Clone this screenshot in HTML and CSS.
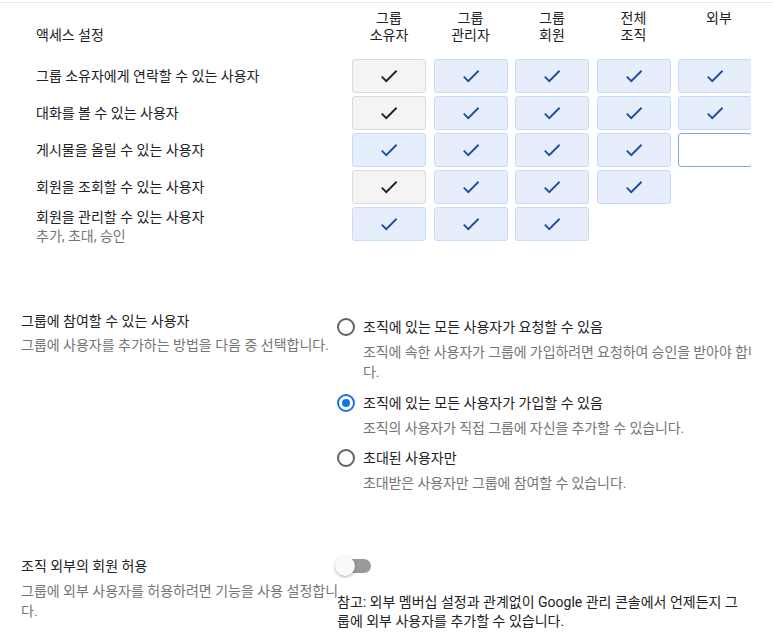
FILE: index.html
```html
<!DOCTYPE html>
<html lang="ko">
<head>
<meta charset="utf-8">
<title>그룹 설정</title>
<link rel="stylesheet" href="styles.css">
</head>
<body>
<div class="topline"></div>
<div class="page">
  <div class="access">
    <div class="hlabel">액세스 설정</div>
    <div class="hcol">그룹<br>소유자</div>
    <div class="hcol">그룹<br>관리자</div>
    <div class="hcol">그룹<br>회원</div>
    <div class="hcol">전체<br>조직</div>
    <div class="hcol hcol-ext">외부</div>

    <div class="rlabel">그룹 소유자에게 연락할 수 있는 사용자</div>
    <div class="cell locked"><svg class="chk" viewBox="0 0 24 24"><path d="M9 16.17L4.83 12l-1.42 1.41L9 19 21 7l-1.41-1.41z"/></svg></div>
    <div class="cell on"><svg class="chk" viewBox="0 0 24 24"><path d="M9 16.17L4.83 12l-1.42 1.41L9 19 21 7l-1.41-1.41z"/></svg></div>
    <div class="cell on"><svg class="chk" viewBox="0 0 24 24"><path d="M9 16.17L4.83 12l-1.42 1.41L9 19 21 7l-1.41-1.41z"/></svg></div>
    <div class="cell on"><svg class="chk" viewBox="0 0 24 24"><path d="M9 16.17L4.83 12l-1.42 1.41L9 19 21 7l-1.41-1.41z"/></svg></div>
    <div class="cell on"><svg class="chk" viewBox="0 0 24 24"><path d="M9 16.17L4.83 12l-1.42 1.41L9 19 21 7l-1.41-1.41z"/></svg></div>

    <div class="rlabel">대화를 볼 수 있는 사용자</div>
    <div class="cell locked"><svg class="chk" viewBox="0 0 24 24"><path d="M9 16.17L4.83 12l-1.42 1.41L9 19 21 7l-1.41-1.41z"/></svg></div>
    <div class="cell on"><svg class="chk" viewBox="0 0 24 24"><path d="M9 16.17L4.83 12l-1.42 1.41L9 19 21 7l-1.41-1.41z"/></svg></div>
    <div class="cell on"><svg class="chk" viewBox="0 0 24 24"><path d="M9 16.17L4.83 12l-1.42 1.41L9 19 21 7l-1.41-1.41z"/></svg></div>
    <div class="cell on"><svg class="chk" viewBox="0 0 24 24"><path d="M9 16.17L4.83 12l-1.42 1.41L9 19 21 7l-1.41-1.41z"/></svg></div>
    <div class="cell on"><svg class="chk" viewBox="0 0 24 24"><path d="M9 16.17L4.83 12l-1.42 1.41L9 19 21 7l-1.41-1.41z"/></svg></div>

    <div class="rlabel">게시물을 올릴 수 있는 사용자</div>
    <div class="cell on"><svg class="chk" viewBox="0 0 24 24"><path d="M9 16.17L4.83 12l-1.42 1.41L9 19 21 7l-1.41-1.41z"/></svg></div>
    <div class="cell on"><svg class="chk" viewBox="0 0 24 24"><path d="M9 16.17L4.83 12l-1.42 1.41L9 19 21 7l-1.41-1.41z"/></svg></div>
    <div class="cell on"><svg class="chk" viewBox="0 0 24 24"><path d="M9 16.17L4.83 12l-1.42 1.41L9 19 21 7l-1.41-1.41z"/></svg></div>
    <div class="cell on"><svg class="chk" viewBox="0 0 24 24"><path d="M9 16.17L4.83 12l-1.42 1.41L9 19 21 7l-1.41-1.41z"/></svg></div>
    <div class="cell off"></div>

    <div class="rlabel">회원을 조회할 수 있는 사용자</div>
    <div class="cell locked"><svg class="chk" viewBox="0 0 24 24"><path d="M9 16.17L4.83 12l-1.42 1.41L9 19 21 7l-1.41-1.41z"/></svg></div>
    <div class="cell on"><svg class="chk" viewBox="0 0 24 24"><path d="M9 16.17L4.83 12l-1.42 1.41L9 19 21 7l-1.41-1.41z"/></svg></div>
    <div class="cell on"><svg class="chk" viewBox="0 0 24 24"><path d="M9 16.17L4.83 12l-1.42 1.41L9 19 21 7l-1.41-1.41z"/></svg></div>
    <div class="cell on"><svg class="chk" viewBox="0 0 24 24"><path d="M9 16.17L4.83 12l-1.42 1.41L9 19 21 7l-1.41-1.41z"/></svg></div>

    <div class="rlabel rlabel-two">회원을 관리할 수 있는 사용자<span class="rsub">추가, 초대, 승인</span></div>
    <div class="cell on"><svg class="chk" viewBox="0 0 24 24"><path d="M9 16.17L4.83 12l-1.42 1.41L9 19 21 7l-1.41-1.41z"/></svg></div>
    <div class="cell on"><svg class="chk" viewBox="0 0 24 24"><path d="M9 16.17L4.83 12l-1.42 1.41L9 19 21 7l-1.41-1.41z"/></svg></div>
    <div class="cell on"><svg class="chk" viewBox="0 0 24 24"><path d="M9 16.17L4.83 12l-1.42 1.41L9 19 21 7l-1.41-1.41z"/></svg></div>
  </div>

  <div class="setting join">
    <div class="side">
      <div class="stitle">그룹에 참여할 수 있는 사용자</div>
      <div class="sdesc">그룹에 사용자를 추가하는 방법을 다음 중 선택합니다.</div>
    </div>
    <div class="options">
      <div class="opt">
        <span class="radio"></span>
        <div class="otext">
          <div class="olabel">조직에 있는 모든 사용자가 요청할 수 있음</div>
          <div class="odesc">조직에 속한 사용자가 그룹에 가입하려면 요청하여 승인을 받아야 합니다.</div>
        </div>
      </div>
      <div class="opt">
        <span class="radio checked"></span>
        <div class="otext">
          <div class="olabel">조직에 있는 모든 사용자가 가입할 수 있음</div>
          <div class="odesc">조직의 사용자가 직접 그룹에 자신을 추가할 수 있습니다.</div>
        </div>
      </div>
      <div class="opt">
        <span class="radio"></span>
        <div class="otext">
          <div class="olabel">초대된 사용자만</div>
          <div class="odesc">초대받은 사용자만 그룹에 참여할 수 있습니다.</div>
        </div>
      </div>
    </div>
  </div>

  <div class="setting external">
    <div class="side">
      <div class="stitle">조직 외부의 회원 허용</div>
      <div class="sdesc sdesc-wide">그룹에 외부 사용자를 허용하려면 기능을 사용 설정합니다.</div>
    </div>
    <div class="extright">
      <div class="toggle"><span class="track"></span><span class="thumb"></span></div>
      <p class="note">참고: 외부 멤버십 설정과 관계없이 Google 관리 콘솔에서 언제든지 그룹에 외부 사용자를 추가할 수 있습니다.</p>
    </div>
  </div>
</div>
</body>
</html>
```

FILE: styles.css
```css
html, body {
  margin: 0;
  padding: 0;
  background: #fff;
}

body {
  font-family: Roboto, "Noto Sans CJK KR", sans-serif;
  font-size: 14px;
  color: #202124;
}

.topline {
  margin-top: 2px;
  border-top: 1px solid #e8eaed;
}

.page {
  width: 751px;
  overflow: hidden;
}

/* ---------- access matrix ---------- */
.access {
  display: grid;
  grid-template-columns: 308.5px repeat(5, 74px);
  column-gap: 7.5px;
  row-gap: 3px;
  padding: 7px 0 0 36px;
  width: max-content;
}

.hlabel {
  align-self: end;
  line-height: 17px;
  padding-bottom: 12px;
}

.hcol {
  text-align: center;
  line-height: 17px;
  padding-bottom: 12px;
}

.hcol-ext {
  padding-left: 8px;
}

.rlabel {
  grid-column: 1;
  align-self: center;
  line-height: 19px;
}

.rlabel-two {
  align-self: start;
  margin-top: 1px;
  margin-bottom: -6px;
}

.rsub {
  display: block;
  color: #757575;
}

.cell {
  box-sizing: border-box;
  height: 34px;
  border: 1px solid #c5dcfb;
  border-radius: 3px;
  display: flex;
  align-items: center;
  justify-content: center;
}

.cell.on {
  background: #e6eefc;
}

.cell.on .chk {
  fill: #1c4fa3;
}

.cell.locked {
  background: #f4f4f4;
  border-color: #dadada;
}

.cell.locked .chk {
  fill: #202124;
}

.cell.off {
  background: #fff;
  border-color: #7fa8e6;
}

.chk {
  width: 22px;
  height: 22px;
}

/* ---------- settings rows ---------- */
.setting {
  display: grid;
  grid-template-columns: 316px 433px;
  padding-left: 21px;
  width: max-content;
}

.join {
  margin-top: 70px;
}

.external {
  margin-top: 63px;
}

.stitle {
  line-height: 20px;
}

.sdesc {
  margin-top: 4px;
  line-height: 20px;
  color: #757575;
}

.external .sdesc {
  margin-top: 5px;
}

.sdesc-wide {
  margin-right: -2px;
}

.options {
  padding-top: 6px;
}

.opt {
  display: flex;
  gap: 8px;
}

.opt + .opt {
  margin-top: 10.5px;
}

.radio {
  flex: none;
  box-sizing: border-box;
  width: 18px;
  height: 18px;
  margin-top: 1px;
  border: 2px solid #5f6368;
  border-radius: 50%;
  display: flex;
  align-items: center;
  justify-content: center;
}

.radio.checked {
  border-color: #1a73e8;
}

.radio.checked::after {
  content: "";
  width: 8px;
  height: 8px;
  border-radius: 50%;
  background: #1a73e8;
}

.olabel {
  line-height: 20px;
}

.odesc {
  margin-top: 5px;
  line-height: 20px;
  letter-spacing: -0.1px;
  color: #757575;
}

.toggle {
  position: relative;
  width: 34px;
  height: 20px;
}

.track {
  position: absolute;
  left: 0;
  top: 3px;
  width: 34px;
  height: 14px;
  border-radius: 7px;
  background: #9a9a9a;
}

.thumb {
  position: absolute;
  left: -2px;
  top: 0;
  width: 20px;
  height: 20px;
  border-radius: 50%;
  background: #fafafa;
  box-shadow: 0 1px 3px rgba(0, 0, 0, 0.35);
}

.note {
  margin: 17px 0 0;
  width: 404px;
  line-height: 19px;
  color: #202124;
}
```
